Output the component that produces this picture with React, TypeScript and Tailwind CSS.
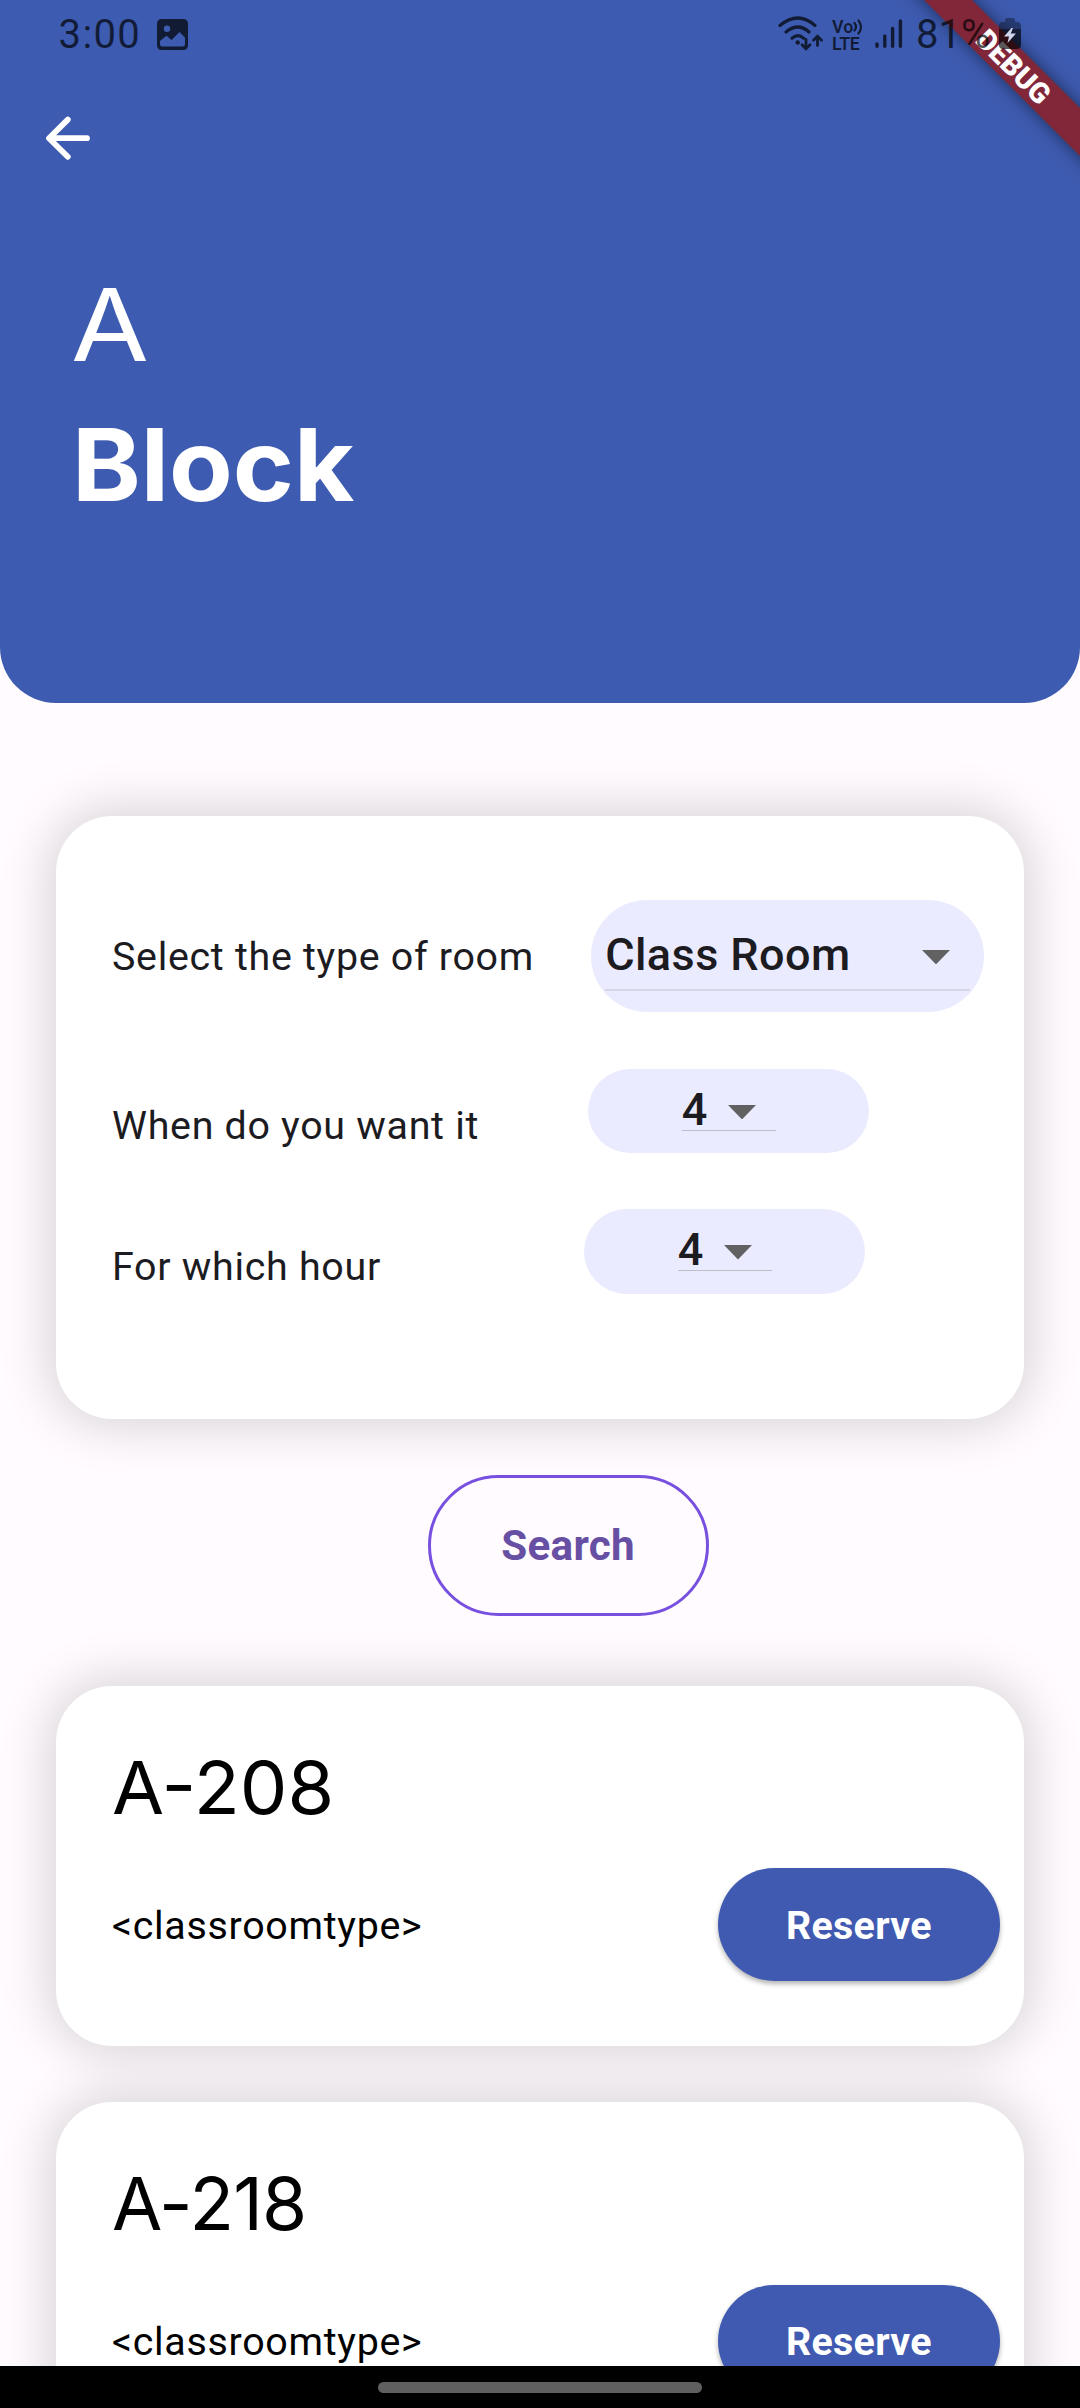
import React from "react";

function Caret({ className }: { className?: string }) {
  return (
    <svg viewBox="0 0 28 14.4" className={`h-[14.4px] w-[28px] shrink-0 ${className ?? ""}`} aria-hidden>
      <path d="M0 0H28L14 14.4Z" fill="#616161" />
    </svg>
  );
}

function StatusBar() {
  return (
    <div className="absolute inset-x-0 top-0 z-20 flex h-[69px] items-center justify-between pl-[58.5px] pr-[59px] text-black/70">
      <div className="flex items-center">
        <span className="w-[98.5px] text-[40px] font-normal leading-[69px] tracking-[1.4px]">3:00</span>
        <svg viewBox="0 0 31 31" className="h-[31px] w-[31px]" aria-hidden>
          <path
            fillRule="evenodd"
            fill="currentColor"
            d="M5 0H26Q31 0 31 5V26Q31 31 26 31H5Q0 31 0 26V5Q0 0 5 0ZM10 6.5A3.2 3.2 0 1 0 10 12.9A3.2 3.2 0 1 0 10 6.5ZM3 22L9.5 16.8L14.5 21L22.5 13L28 18.5V25Q28 27.5 25.5 27.5H5.5Q3 27.5 3 25Z"
          />
        </svg>
      </div>
      <div className="flex h-[69px] items-start">
        <svg viewBox="0 0 46 36" className="mt-[16px] h-[36px] w-[46px]" fill="none" stroke="currentColor" strokeLinecap="round" aria-hidden>
          <path d="M2 9.5Q20 -5.5 37 9.5" strokeWidth="3.2" />
          <path d="M8 16Q20 6 31 16" strokeWidth="3.2" />
          <path d="M14 22.2Q20 17 25.5 22.2" strokeWidth="3.2" />
          <circle cx="19.7" cy="26.5" r="2.2" fill="currentColor" stroke="none" />
          <path d="M28 23.5V32.5M24 28.8L28 32.8L32 28.8" strokeWidth="2.8" />
          <path d="M39.5 29.5V20.5M35.5 24.2L39.5 20.2L43.5 24.2" strokeWidth="2.8" />
        </svg>
        <div className="ml-[8px] mt-[18px] flex w-[33px] flex-col text-[17.8px] font-semibold leading-[17px]">
          <span className="flex">
            <span>Vo</span>
            <svg viewBox="0 0 10 16" className="mt-[1px] h-[16px] w-[10px]" fill="none" stroke="currentColor" strokeWidth="2.2" strokeLinecap="round" aria-hidden>
              <path d="M1.5 4Q4.5 8 1.5 11.5M5.5 1.5Q10.5 8 5.5 14.5" />
            </svg>
          </span>
          <span className="tracking-[-0.3px]">LTE</span>
        </div>
        <svg viewBox="0 0 28 30" className="ml-[10px] mt-[19px] h-[30px] w-[28px]" stroke="currentColor" strokeWidth="3.4" strokeLinecap="round" aria-hidden>
          <path d="M2 25V27.3M9.8 17V27.3M17.6 9.5V27.3M25.4 2V27.3" />
        </svg>
        <span className="ml-[13px] w-[83px] text-[40px] font-normal leading-[69px] tracking-[0px]">81%</span>
        <svg viewBox="0 0 22 31" className="mt-[18px] h-[31px] w-[22px]" aria-hidden>
          <path d="M6 4V2Q6 0 8 0H14Q16 0 16 2V4H18Q22 4 22 8V11H0V8Q0 4 4 4Z" fill="black" fillOpacity="0.35" />
          <path d="M0 11H22V27Q22 31 18 31H4Q0 31 0 27Z" fill="black" fillOpacity="0.65" />
          <path d="M12.5 10L5 18.5H10L8.5 25L17 15.5H11.8L14 10Z" fill="#cfd5ea" />
        </svg>
      </div>
    </div>
  );
}

function DebugBanner() {
  return (
    <div className="absolute right-0 top-0 z-10 h-[240px] w-[240px] overflow-hidden">
      <div className="absolute left-[4px] top-[49.4px] flex h-[34.4px] w-[340px] rotate-45 items-center justify-center bg-[#82273a] pt-[3px] text-[28.7px] font-black leading-none text-white shadow-[0_0_17px_rgba(0,0,0,0.5)]">
        DEBUG
      </div>
    </div>
  );
}

type SelectProps = { value: string; wide?: boolean };

function Select({ value, wide }: SelectProps) {
  if (wide) {
    return (
      <div className="flex h-[112.5px] w-[393.5px] items-start rounded-full bg-[#ebebff] pl-[14.5px] pt-[19px]">
        <div className="flex h-[72px] w-[364.5px] items-center justify-between border-b-2 border-[#d5d5e5] pr-[20px]">
          <span className="pt-[2px] text-[45px] font-medium leading-none tracking-[0.42px] text-[#1c1b1f]">{value}</span>
          <Caret className="mt-[6px]" />
        </div>
      </div>
    );
  }
  return (
    <div className="flex h-[84.4px] w-[281.3px] items-start justify-center rounded-full bg-[#ebebff] pt-[20px]">
      <div className="flex h-[42px] w-[94px] items-center justify-between border-b border-[#bebecb] pr-[20px]">
        <span className="text-[45px] font-medium leading-none text-[#1c1b1f]">{value}</span>
        <Caret className="mt-[6px]" />
      </div>
    </div>
  );
}

function RoomCard({ name, nameClass }: { name: string; nameClass: string }) {
  return (
    <section className="h-[360.3px] shrink-0 rounded-[56px] bg-white pl-[56px] pr-[24.5px] pt-[66px] shadow-[0_0_50px_8px_rgba(0,0,0,0.155)]">
      <h2 className={`w-max origin-left font-['Inter'] text-[73px] font-normal leading-[72px] text-black ${nameClass}`}>{name}</h2>
      <div className="mt-[44.6px] flex h-[112.5px] items-center justify-between">
        <span className="pt-[2px] text-[39.4px] leading-none tracking-[0.7px] text-black">&lt;classroomtype&gt;</span>
        <button className="h-[112.5px] w-[281.3px] rounded-full bg-[#3f5ab0] pt-[2px] text-[39.4px] font-bold leading-none tracking-[0.3px] text-white shadow-[0_3px_5px_rgba(0,0,0,0.3)]">
          Reserve
        </button>
      </div>
    </section>
  );
}

export default function App() {
  return (
    <div className="relative flex h-[2408px] w-[1080px] flex-col overflow-hidden bg-[#fffbff] font-['Roboto',sans-serif]">
      <StatusBar />
      <DebugBanner />
      <main className="flex min-h-0 flex-1 flex-col overflow-hidden">
        <header className="h-[703px] shrink-0 rounded-b-[56px] bg-[#3d5bb0] text-white">
          <button className="ml-[45px] mt-[116px] block h-[45px] w-[46px]" aria-label="Back">
            <svg viewBox="0 0 46 45" className="h-full w-full" fill="none" stroke="currentColor" strokeWidth="5.8" strokeLinecap="round" strokeLinejoin="round" aria-hidden>
              <path d="M22.8 3.6L4 22.2L22.8 40.8M4.5 22.2H42" />
            </svg>
          </button>
          <h1 className="ml-[71px] mt-[94px] font-['Inter'] text-[100px] leading-[140px]">
            <span className="block w-max origin-left scale-x-[1.13] font-normal">A</span>
            <span className="ml-[1px] block w-max origin-left scale-x-[1.04] font-bold">Block</span>
          </h1>
        </header>

        <div className="mt-[112.5px] flex flex-col px-[56px]">
          <section className="flex h-[603.5px] shrink-0 flex-col gap-[56.2px] rounded-[56px] bg-white pl-[56px] pt-[84.4px] text-[39.4px] leading-none tracking-[0.7px] text-[#1c1b1f] shadow-[0_0_50px_8px_rgba(0,0,0,0.155)]">
            <div className="flex items-center">
              <span className="w-[478.7px] pt-[2px]">Select the type of room</span>
              <Select value="Class Room" wide />
            </div>
            <div className="flex items-center">
              <span className="w-[476px] pt-[30px]">When do you want it</span>
              <Select value="4" />
            </div>
            <div className="flex items-center">
              <span className="w-[472px] pt-[30px]">For which hour</span>
              <Select value="4" />
            </div>
          </section>

          <button className="ml-[371.5px] mt-[56px] h-[140.6px] w-[281.3px] shrink-0 rounded-full border-[3px] border-[#7850e0] pt-[2px] text-[42.2px] font-bold leading-none tracking-[0.3px] text-[#6750a4]">
            Search
          </button>

          <div className="mt-[70px] flex flex-col gap-[56.2px]">
            <RoomCard name="A-208" nameClass="scale-x-[1.035]" />
            <RoomCard name="A-218" nameClass="tracking-[-0.8px]" />
          </div>
        </div>
      </main>
      <footer className="z-10 flex h-[42px] shrink-0 justify-center bg-black pt-[16px]">
        <div className="h-[11px] w-[324px] rounded-full bg-[#5f5f5f]" />
      </footer>
    </div>
  );
}
